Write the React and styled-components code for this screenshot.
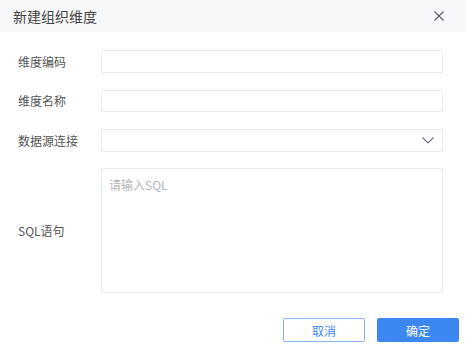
import React from "react";
import styled, { createGlobalStyle } from "styled-components";

const Global = createGlobalStyle`
  html, body { margin: 0; padding: 0; background: #fff; }
  body { font-family: "Noto Sans CJK SC", "Noto Sans", sans-serif; }
  * { box-sizing: border-box; }
`;

const Dialog = styled.div`
  width: 466px;
  height: 350px;
  background: #fff;
  display: flex;
  flex-direction: column;
`;

const Header = styled.div`
  height: 32px;
  background: #f7f8fa;
  display: flex;
  align-items: center;
  justify-content: space-between;
  padding: 0 22px 0 13px;
`;

const Title = styled.div`
  font-size: 14px;
  color: #444;
  line-height: 1;
`;

const Close = styled.svg`
  width: 10px;
  height: 10px;
  display: block;
`;

const Body = styled.div`
  display: flex;
  flex-direction: column;
  padding: 18px 23px 0 18px;
`;

const Row = styled.div`
  display: flex;
  align-items: center;
  margin-bottom: ${(p) => p.gap}px;
`;

const Label = styled.div`
  width: 83px;
  flex: none;
  font-size: 12px;
  color: #555;
  line-height: 1;
`;

const Input = styled.div`
  flex: 1;
  height: ${(p) => p.h}px;
  border: 1px solid #e8e9ee;
  border-radius: 2px;
  background: #fff;
  display: flex;
  align-items: center;
  justify-content: flex-end;
  padding-right: 8px;
`;

const TextArea = styled.div`
  flex: 1;
  height: 125px;
  border: 1px solid #e8e9ee;
  border-radius: 2px;
  padding: 9px 7px;
  font-size: 12px;
  color: #b3b6be;
  line-height: 14px;
`;

const Footer = styled.div`
  display: flex;
  justify-content: flex-end;
  gap: 12px;
  padding: 25px 7px 0 0;
`;

const Button = styled.button`
  width: 82px;
  height: 24px;
  border-radius: 2px;
  font-family: inherit;
  font-size: 12px;
  padding: 0;
  cursor: pointer;
  border: 1px solid ${(p) => (p.$primary ? "#3c87f2" : "#8ab4f6")};
  background: ${(p) => (p.$primary ? "#3c87f2" : "#fff")};
  color: ${(p) => (p.$primary ? "#fff" : "#3c87f2")};
`;

const Chevron = styled.svg`
  width: 12px;
  height: 7px;
  display: block;
`;

export default function App() {
  return (
    <>
      <Global />
      <Dialog>
        <Header>
          <Title>新建组织维度</Title>
          <Close viewBox="0 0 10 10">
            <path d="M0.5 0.5L9.5 9.5M9.5 0.5L0.5 9.5" stroke="#5a6172" strokeWidth="1.2" fill="none" />
          </Close>
        </Header>
        <Body>
          <Row gap={17}>
            <Label>维度编码</Label>
            <Input h={23} />
          </Row>
          <Row gap={17}>
            <Label>维度名称</Label>
            <Input h={22} />
          </Row>
          <Row gap={16}>
            <Label>数据源连接</Label>
            <Input h={23}>
              <Chevron viewBox="0 0 12 7">
                <path d="M0.5 0.5L6 6L11.5 0.5" stroke="#6b7385" strokeWidth="1.2" fill="none" />
              </Chevron>
            </Input>
          </Row>
          <Row gap={0}>
            <Label>SQL语句</Label>
            <TextArea>请输入SQL</TextArea>
          </Row>
        </Body>
        <Footer>
          <Button>取消</Button>
          <Button $primary>确定</Button>
        </Footer>
      </Dialog>
    </>
  );
}
